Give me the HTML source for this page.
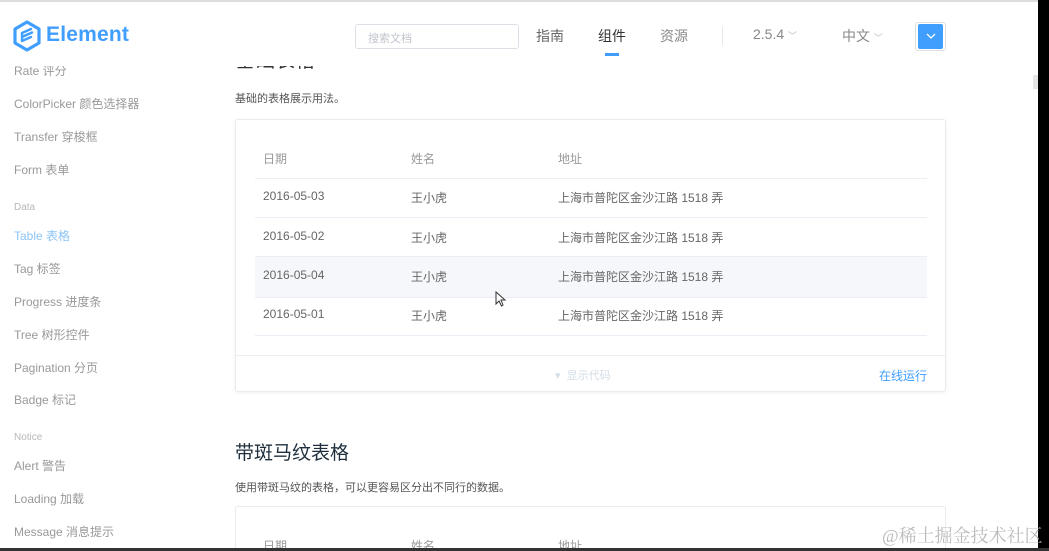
<!DOCTYPE html>
<html style="width:1049px;height:551px;overflow:hidden"><head><meta charset="utf-8"><style>
*{margin:0;padding:0;box-sizing:border-box}
body{width:1049px;height:551px;overflow:hidden;background:#fff;font-family:"Liberation Sans","Noto Sans CJK SC",sans-serif;position:relative}
.a{position:absolute;white-space:nowrap}
.side{font-size:12px;color:#999}
.grp{font-size:10px;color:#b8b8b8}
.td{font-size:12px;color:#666}
.th{font-size:12px;color:#999}
.hl{position:absolute;left:255px;width:672px;height:1px;background:#ebeef5}
</style></head><body>
<div class="a" style="left:0;top:0;width:1049px;height:2px;background:#ddd"></div>
<div class="a" style="left:235px;top:44px;font-size:20px;color:#333">基础表格</div>
<!-- sidebar -->
<div class="a side" style="left:14px;top:62px">Rate 评分</div>
<div class="a side" style="left:14px;top:95px">ColorPicker 颜色选择器</div>
<div class="a side" style="left:14px;top:128px">Transfer 穿梭框</div>
<div class="a side" style="left:14px;top:161px">Form 表单</div>
<div class="a grp" style="left:14px;top:202px">Data</div>
<div class="a side" style="left:14px;top:227px;color:#8cc4f6">Table 表格</div>
<div class="a side" style="left:14px;top:260px">Tag 标签</div>
<div class="a side" style="left:14px;top:293px">Progress 进度条</div>
<div class="a side" style="left:14px;top:326px">Tree 树形控件</div>
<div class="a side" style="left:14px;top:359px">Pagination 分页</div>
<div class="a side" style="left:14px;top:391px">Badge 标记</div>
<div class="a grp" style="left:14px;top:432px">Notice</div>
<div class="a side" style="left:14px;top:457px">Alert 警告</div>
<div class="a side" style="left:14px;top:490px">Loading 加载</div>
<div class="a side" style="left:14px;top:523px">Message 消息提示</div>
<!-- header -->
<div class="a" style="left:0;top:2px;width:1038px;height:64px;background:#fff"></div>
<svg class="a" style="left:12px;top:20px" width="30" height="32" viewBox="0 0 30 32"><path d="M15 2 L27 9 L27 23 L15 30 L3 23 L3 9 Z" fill="none" stroke="#409eff" stroke-width="3.2" stroke-linejoin="round"/><path d="M10 13 L19 9 M10 17 L20 12.5 M10 21 L19 17 M10 13 L10 21" stroke="#409eff" stroke-width="2.4" fill="none" stroke-linecap="round"/></svg>
<div class="a" style="left:46px;top:23px;font-size:21px;font-weight:bold;color:#409eff;letter-spacing:0.2px">Element</div>
<div class="a" style="left:355px;top:24px;width:164px;height:25px;border:1px solid #dcdfe6;border-radius:3px;font-size:11px;color:#c0c4cc;padding:5px 12px">搜索文档</div>
<div class="a" style="left:536px;top:26px;font-size:14px;color:#666">指南</div>
<div class="a" style="left:598px;top:26px;font-size:14px;color:#333">组件</div>
<div class="a" style="left:605px;top:53px;width:14px;height:3px;background:#409eff"></div>
<div class="a" style="left:660px;top:26px;font-size:14px;color:#888">资源</div>
<div class="a" style="left:722px;top:27px;width:1px;height:18px;background:#e8e8e8"></div>
<div class="a" style="left:753px;top:26px;font-size:14px;color:#888">2.5.4 <span style="font-size:9px;color:#bbb">﹀</span></div>
<div class="a" style="left:842px;top:26px;font-size:14px;color:#888">中文 <span style="font-size:9px;color:#bbb">﹀</span></div>
<div class="a" style="left:915px;top:22px;width:31px;height:29px;border:1px solid #e0e0e0;border-radius:3px;background:#fff"></div>
<div class="a" style="left:918px;top:24px;width:25px;height:25px;background:#409eff;border-radius:2px"></div>
<svg class="a" style="left:926px;top:33px" width="10" height="6" viewBox="0 0 10 6"><path d="M1 1 L5 5 L9 1" stroke="#fff" stroke-width="1.3" fill="none"/></svg>
<!-- content -->
<div class="a" style="left:235px;top:90px;font-size:11px;color:#555">基础的表格展示用法。</div>
<div class="a" style="left:235px;top:119px;width:711px;height:273px;border:1px solid #ebebeb;border-radius:3px;box-shadow:0 1px 4px rgba(0,0,0,0.06)"></div>
<div class="a th" style="left:263px;top:150px">日期</div>
<div class="a th" style="left:411px;top:150px">姓名</div>
<div class="a th" style="left:558px;top:150px">地址</div>
<div class="hl" style="top:178px"></div>
<div class="a" style="left:255px;top:257px;width:672px;height:40px;background:#f5f7fa"></div>
<div class="hl" style="top:217px"></div>
<div class="hl" style="top:256px"></div>
<div class="hl" style="top:297px"></div>
<div class="hl" style="top:335px"></div>
<div class="a td" style="left:263px;top:189px">2016-05-03</div><div class="a td" style="left:411px;top:189px">王小虎</div><div class="a td" style="left:558px;top:189px">上海市普陀区金沙江路 1518 弄</div>
<div class="a td" style="left:263px;top:229px">2016-05-02</div><div class="a td" style="left:411px;top:229px">王小虎</div><div class="a td" style="left:558px;top:229px">上海市普陀区金沙江路 1518 弄</div>
<div class="a td" style="left:263px;top:268px">2016-05-04</div><div class="a td" style="left:411px;top:268px">王小虎</div><div class="a td" style="left:558px;top:268px">上海市普陀区金沙江路 1518 弄</div>
<div class="a td" style="left:263px;top:307px">2016-05-01</div><div class="a td" style="left:411px;top:307px">王小虎</div><div class="a td" style="left:558px;top:307px">上海市普陀区金沙江路 1518 弄</div>
<svg class="a" style="left:495px;top:291px" width="12" height="17" viewBox="0 0 12 17"><path d="M1 1 L1 13 L4 10 L6.5 15 L8 14 L6 9 L10 9 Z" fill="#fff" stroke="#333" stroke-width="1"/></svg>
<div class="a" style="left:236px;top:355px;width:709px;height:1px;background:#efefef"></div>
<div class="a" style="left:555px;top:367px;font-size:11px;color:#d3dce6">▾ &nbsp;显示代码</div>
<div class="a" style="left:879px;top:367px;font-size:12px;color:#409eff">在线运行</div>
<div class="a" style="left:235px;top:438px;font-size:19px;color:#1f2f3d">带斑马纹表格</div>
<div class="a" style="left:235px;top:479px;font-size:11px;color:#555">使用带斑马纹的表格，可以更容易区分出不同行的数据。</div>
<div class="a" style="left:235px;top:506px;width:711px;height:45px;border:1px solid #ebebeb;border-bottom:none;border-radius:3px 3px 0 0"></div>
<div class="a th" style="left:263px;top:537px">日期</div>
<div class="a th" style="left:411px;top:537px">姓名</div>
<div class="a th" style="left:558px;top:537px">地址</div>
<div class="a" style="left:1033px;top:75px;width:5px;height:14px;background:#e6e6e6"></div>
<div class="a" style="left:1038px;top:0;width:11px;height:551px;background:#000"></div>
<div class="a" style="left:0;top:548px;width:1049px;height:3px;background:#333"></div>
<div class="a" style="left:882px;top:522px;font-size:18px;color:#bbb;font-family:'Liberation Serif','Noto Serif CJK SC',serif">@稀土掘金技术社区</div>
</body></html>
